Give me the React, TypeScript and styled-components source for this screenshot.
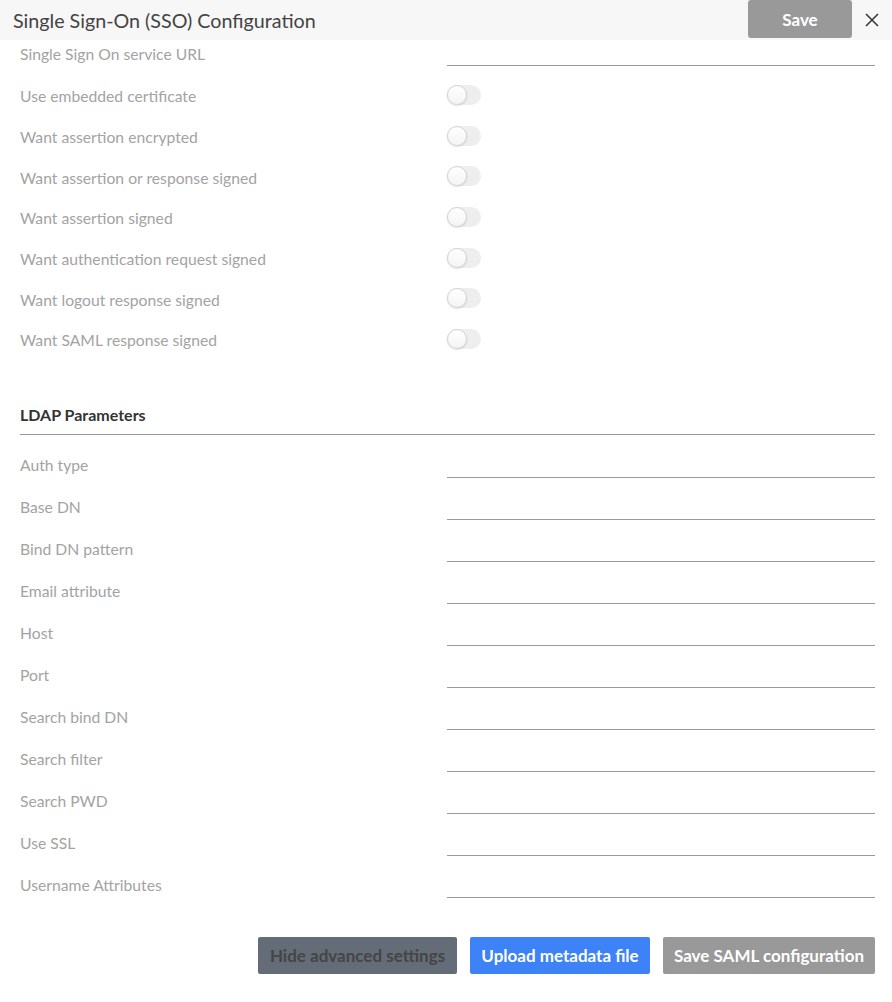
import React, { useState } from "react";
import styled, { createGlobalStyle } from "styled-components";

const GlobalStyle = createGlobalStyle`
  body {
    margin: 0;
    background: #ffffff;
    font-family: Lato, "Open Sans", sans-serif;
  }
`;

const Wrapper = styled.div`
  width: 892px;
  height: 1002px;
  overflow: hidden;
  background: #ffffff;
  display: flex;
  flex-direction: column;
`;

const Header = styled.div`
  height: 40px;
  flex: none;
  background-color: #f7f7f7;
  display: flex;
  align-items: center;
  padding: 0 12px 0 13px;

  h1 {
    flex: 1;
    margin: 0;
    font-size: 19.7px;
    font-weight: 400;
    color: #444444;
  }
`;

const HeaderSave = styled.button`
  width: 104px;
  height: 38px;
  align-self: flex-start;
  border: none;
  border-radius: 3px;
  background-color: #999999;
  color: #ffffff;
  font-family: Lato, sans-serif;
  font-weight: 700;
  font-size: 17px;
  margin-right: 12px;
`;

const Close = styled.button`
  border: none;
  background: none;
  padding: 0;
  width: 16px;
  height: 16px;
  display: flex;
  align-items: center;
  justify-content: center;
`;

const Body = styled.div`
  padding: 0 17px 0 20px;
  display: flex;
  flex-direction: column;
`;

const Row = styled.div<{ $height: number }>`
  display: grid;
  grid-template-columns: 427px 1fr;
  align-items: center;
  height: ${(p) => p.$height}px;
`;

const Label = styled.label`
  font-size: 15.7px;
  color: #a3a3a3;
`;

const Input = styled.input<{ $h: number }>`
  height: ${(p) => p.$h}px;
  box-sizing: border-box;
  border: none;
  border-bottom: 1px solid #9a9a9a;
  background: transparent;
  font-family: Lato, sans-serif;
  font-size: 15px;
  padding: 0;

  :focus {
    outline: none;
  }
`;

const ToggleList = styled.div`
  padding-top: 8px;
`;

const Track = styled.button<{ $on: boolean }>`
  position: relative;
  width: 34px;
  height: 20px;
  border: none;
  border-radius: 10px;
  padding: 0;
  background-color: ${(p) => (p.$on ? "#3d82f6" : "#eeeeee")};
`;

const Thumb = styled.span<{ $on: boolean }>`
  position: absolute;
  top: 0;
  left: ${(p) => (p.$on ? "14px" : "0")};
  width: 20px;
  height: 20px;
  box-sizing: border-box;
  border-radius: 50%;
  background: linear-gradient(#ffffff, #f4f4f4);
  border: 1px solid #d4d4d4;
  box-shadow: 0 1px 2px rgba(0, 0, 0, 0.12);
`;

const SectionTitle = styled.div`
  margin-top: 45px;
  padding-bottom: 10px;
  border-bottom: 1px solid #999999;
  font-size: 16px;
  line-height: 18px;
  font-weight: 700;
  color: #333333;
`;

const FieldList = styled.div`
  margin-top: 9px;
`;

const Footer = styled.div`
  display: flex;
  justify-content: flex-end;
  gap: 13px;
  padding: 31px 17px 0 0;
`;

const ActionButton = styled.button<{ $bg: string; $fg: string; $w: number }>`
  width: ${(p) => p.$w}px;
  height: 37px;
  border: none;
  border-radius: 2px;
  background-color: ${(p) => p.$bg};
  color: ${(p) => p.$fg};
  font-family: Lato, sans-serif;
  font-weight: 700;
  font-size: 17px;
  white-space: nowrap;
  padding: 0;
`;

const toggles = [
  "Use embedded certificate",
  "Want assertion encrypted",
  "Want assertion or response signed",
  "Want assertion signed",
  "Want authentication request signed",
  "Want logout response signed",
  "Want SAML response signed",
];

const ldapFields = [
  "Auth type",
  "Base DN",
  "Bind DN pattern",
  "Email attribute",
  "Host",
  "Port",
  "Search bind DN",
  "Search filter",
  "Search PWD",
  "Use SSL",
  "Username Attributes",
];

const Toggle: React.FC = () => {
  const [on, setOn] = useState(false);
  return (
    <Track $on={on} onClick={() => setOn(!on)}>
      <Thumb $on={on} />
    </Track>
  );
};

const App: React.FC = () => {
  return (
    <Wrapper>
      <GlobalStyle />
      <Header>
        <h1>Single Sign-On (SSO) Configuration</h1>
        <HeaderSave>Save</HeaderSave>
        <Close>
          <svg width="14" height="14" viewBox="0 0 14 14">
            <path d="M1 1 L13 13 M13 1 L1 13" stroke="#333" strokeWidth="1.5" />
          </svg>
        </Close>
      </Header>

      <Body>
        <Row $height={28}>
          <Label>Single Sign On service URL</Label>
          <Input $h={24} />
        </Row>

        <ToggleList>
          {toggles.map((t) => (
            <Row key={t} $height={40.7}>
              <Label>{t}</Label>
              <div>
                <Toggle />
              </div>
            </Row>
          ))}
        </ToggleList>

        <SectionTitle>LDAP Parameters</SectionTitle>

        <FieldList>
          {ldapFields.map((f) => (
            <Row key={f} $height={42}>
              <Label>{f}</Label>
              <Input $h={26} />
            </Row>
          ))}
        </FieldList>
      </Body>

      <Footer>
        <ActionButton $bg="#646d77" $fg="#454545" $w={199}>
          Hide advanced settings
        </ActionButton>
        <ActionButton $bg="#3d82f6" $fg="#ffffff" $w={180}>
          Upload metadata file
        </ActionButton>
        <ActionButton $bg="#999999" $fg="#ffffff" $w={212}>
          Save SAML configuration
        </ActionButton>
      </Footer>
    </Wrapper>
  );
};

export default App;
